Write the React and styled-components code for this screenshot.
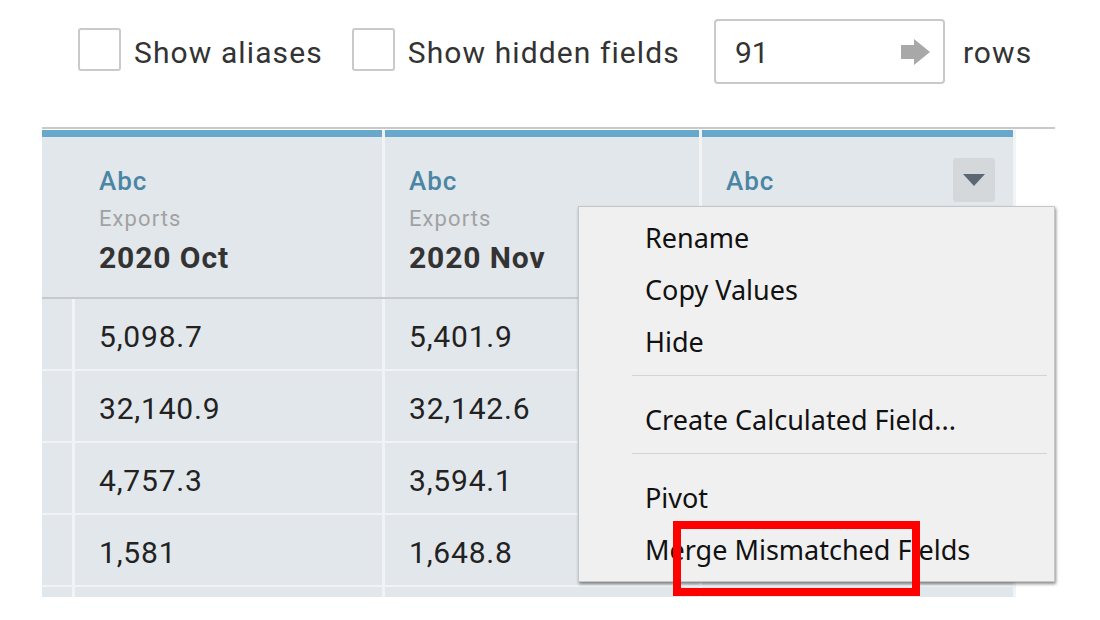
import React from "react";
import styled, { createGlobalStyle } from "styled-components";

const GlobalStyle = createGlobalStyle`
  html, body { margin: 0; padding: 0; background: #ffffff; }
  body { width: 1100px; height: 620px; overflow: hidden; }
  * { box-sizing: border-box; }
`;

const Page = styled.div`
  position: relative;
  width: 1100px;
  height: 620px;
  overflow: hidden;
  background: #ffffff;
  font-family: Roboto, "Liberation Sans", sans-serif;
  color: #333333;
`;

const Toolbar = styled.div`
  display: flex;
  align-items: center;
  height: 65px;
  margin-top: 19px;
  padding-left: 78px;
`;

const Check = styled.span`
  display: inline-block;
  width: 43px;
  height: 43px;
  border: 2px solid #cacaca;
  border-radius: 3px;
  background: #fff;
  margin-bottom: 4px;
  margin-left: ${(p) => p.$gap || 0}px;
`;

const OptionLabel = styled.span`
  font-size: 30px;
  line-height: 35px;
  padding-top: 1px;
  letter-spacing: 1.1px;
  color: #333;
  margin-left: 13px;
`;

const RowsInput = styled.div`
  display: flex;
  align-items: center;
  justify-content: space-between;
  width: 231px;
  height: 65px;
  margin-left: 34px;
  padding: 1px 13px 0 19px;
  border: 2px solid #c9c9c9;
  border-radius: 4px;
  font-size: 30px;
  line-height: 35px;
  color: #333;
`;

const RowsLabel = styled.span`
  font-size: 30px;
  line-height: 35px;
  padding-top: 1px;
  letter-spacing: 1.1px;
  color: #333;
  margin-left: 18px;
`;

const TableFrame = styled.div`
  margin: 43px 0 0 42px;
  width: 1013px;
  height: 470px;
  border-top: 2px solid #c9c9c9;
  padding-top: 1px;
  overflow: hidden;
  background: #fff;
`;

const GridRow = styled.div`
  display: grid;
  grid-template-columns: 30px 307px 314px 311px;
  column-gap: 3px;
  width: 974px;
  padding-right: 3px;
  background: #f1f3f5;
  border-bottom: 2px solid ${(p) => (p.$head ? "#c6cacd" : "#f1f3f5")};
  height: ${(p) => (p.$head ? 169 : 72)}px;
`;

const HeadCell = styled.div`
  display: flex;
  justify-content: space-between;
  align-items: flex-start;
  background: #e2e7eb;
  border-top: 7px solid #68a8cc;
  padding: 21px 18px 0 24px;
`;

const HeadStack = styled.div`
  display: flex;
  flex-direction: column;
  padding-top: 8px;
`;

const TypeTag = styled.span`
  font-size: 26px;
  line-height: 30px;
  font-weight: 500;
  letter-spacing: 1px;
  color: #4a86a4;
`;

const Source = styled.span`
  font-size: 22px;
  line-height: 26px;
  margin-top: 10px;
  letter-spacing: 1.1px;
  color: #a2a2a2;
`;

const FieldName = styled.span`
  font-size: 30px;
  line-height: 34px;
  margin-top: 9px;
  font-weight: 700;
  letter-spacing: 0.9px;
  color: #333;
`;

const DropButton = styled.span`
  display: flex;
  align-items: center;
  justify-content: center;
  width: 42px;
  height: 44px;
  border-radius: 3px;
  background: #d5d8da;
`;

const Cell = styled.div`
  display: flex;
  align-items: center;
  background: #e2e7eb;
  padding: 4px 0 0 24px;
  font-size: 30px;
  line-height: 35px;
  letter-spacing: 0.8px;
  color: #222;
`;

const Menu = styled.div`
  position: absolute;
  left: 578px;
  top: 206px;
  width: 477px;
  padding: 5px 0;
  background: #f0f0f0;
  border: 1px solid #c6c6c6;
  box-shadow: 1px 2px 3px rgba(0, 0, 0, 0.45);
  font-family: "Noto Sans", "Open Sans", sans-serif;
`;

const MenuItem = styled.div`
  height: 52px;
  line-height: 52px;
  padding-left: 66px;
  font-size: 27px;
  color: #111;
  white-space: nowrap;
`;

const MenuSep = styled.div`
  height: 1px;
  margin: 7px 7px 18px 53px;
  background: #d4d4d4;
`;

const Highlight = styled.div`
  position: absolute;
  left: 673px;
  top: 521px;
  width: 247px;
  height: 75px;
  border: 8px solid #ff0000;
`;

const ArrowIcon = () => (
  <svg width="29" height="26" viewBox="0 0 29 26">
    <rect x="0" y="6" width="15" height="14" fill="#a8a8a8" />
    <polygon points="13,0 29,13 13,26" fill="#a8a8a8" />
  </svg>
);

const Caret = () => (
  <svg width="22" height="12" viewBox="0 0 22 12">
    <polygon points="0,0 22,0 11,12" fill="#5d6773" />
  </svg>
);

const columns = [
  { name: "2020 Oct", values: ["5,098.7", "32,140.9", "4,757.3", "1,581", ""] },
  { name: "2020 Nov", values: ["5,401.9", "32,142.6", "3,594.1", "1,648.8", ""] },
  { name: "", values: ["", "", "", "", ""], menu: true },
];

export default function App() {
  return (
    <Page>
      <GlobalStyle />
      <Toolbar>
        <Check />
        <OptionLabel>Show aliases</OptionLabel>
        <Check $gap={29} />
        <OptionLabel>Show hidden fields</OptionLabel>
        <RowsInput>
          <span>91</span>
          <ArrowIcon />
        </RowsInput>
        <RowsLabel>rows</RowsLabel>
      </Toolbar>

      <TableFrame>
        <GridRow $head>
          <HeadCell />
          {columns.map((c, i) => (
            <HeadCell key={i}>
              <HeadStack>
                <TypeTag>Abc</TypeTag>
                {!c.menu && <Source>Exports</Source>}
                {!c.menu && <FieldName>{c.name}</FieldName>}
              </HeadStack>
              {c.menu && (
                <DropButton>
                  <Caret />
                </DropButton>
              )}
            </HeadCell>
          ))}
        </GridRow>
        {[0, 1, 2, 3, 4].map((r) => (
          <GridRow key={r}>
            <Cell />
            {columns.map((c, i) => (
              <Cell key={i}>{c.values[r]}</Cell>
            ))}
          </GridRow>
        ))}
      </TableFrame>

      <Menu>
        <MenuItem>Rename</MenuItem>
        <MenuItem>Copy Values</MenuItem>
        <MenuItem>Hide</MenuItem>
        <MenuSep />
        <MenuItem>Create Calculated Field...</MenuItem>
        <MenuSep />
        <MenuItem>Pivot</MenuItem>
        <MenuItem>Merge Mismatched Fields</MenuItem>
      </Menu>
      <Highlight />
    </Page>
  );
}
